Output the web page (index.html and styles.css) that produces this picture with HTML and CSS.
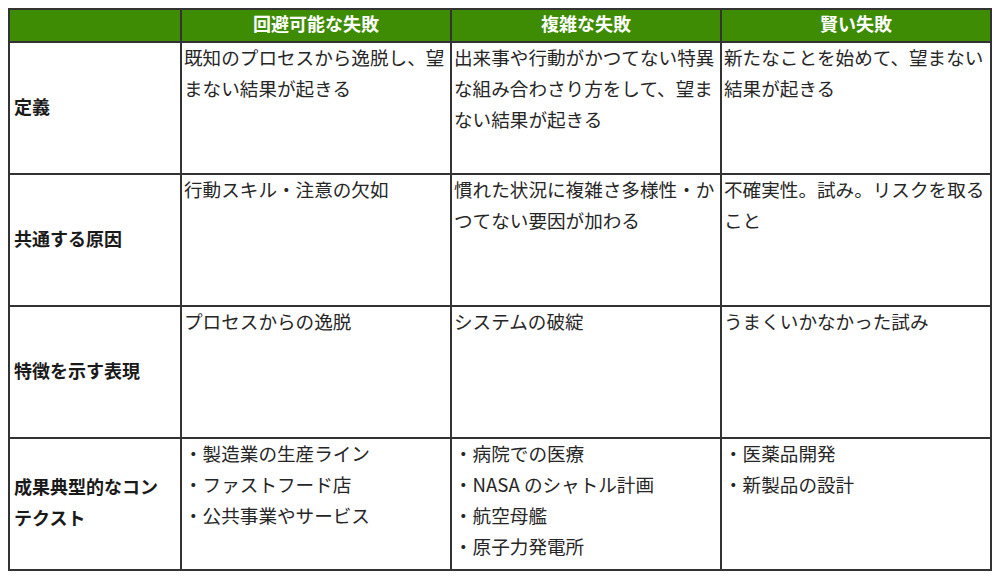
FILE: index.html
```html
<!DOCTYPE html>
<html lang="ja">
<head>
<meta charset="utf-8">
<link rel="stylesheet" href="styles.css">
</head>
<body>
<table class="grid">
  <colgroup>
    <col class="c-label">
    <col class="c-data">
    <col class="c-data">
    <col class="c-data">
  </colgroup>
  <thead>
    <tr class="head">
      <th></th>
      <th>回避可能な失敗</th>
      <th>複雑な失敗</th>
      <th>賢い失敗</th>
    </tr>
  </thead>
  <tbody>
    <tr class="row">
      <th class="label">定義</th>
      <td><div class="txt">既知のプロセスから逸脱し、望まない結果が起きる</div></td>
      <td><div class="txt">出来事や行動がかつてない特異な組み合わさり方をして、望まない結果が起きる</div></td>
      <td><div class="txt">新たなことを始めて、望まない結果が起きる</div></td>
    </tr>
    <tr class="row">
      <th class="label">共通する原因</th>
      <td><div class="txt">行動スキル・注意の欠如</div></td>
      <td><div class="txt">慣れた状況に複雑さ多様性・かつてない要因が加わる</div></td>
      <td><div class="txt">不確実性。試み。リスクを取ること</div></td>
    </tr>
    <tr class="row">
      <th class="label">特徴を示す表現</th>
      <td><div class="txt">プロセスからの逸脱</div></td>
      <td><div class="txt">システムの破綻</div></td>
      <td><div class="txt">うまくいかなかった試み</div></td>
    </tr>
    <tr class="row">
      <th class="label">成果典型的なコン<br>テクスト</th>
      <td><div class="txt">・製造業の生産ライン<br>・ファストフード店<br>・公共事業やサービス</div></td>
      <td><div class="txt">・病院での医療<br>・NASA のシャトル計画<br>・航空母艦<br>・原子力発電所</div></td>
      <td><div class="txt">・医薬品開発<br>・新製品の設計</div></td>
    </tr>
  </tbody>
</table>
</body>
</html>
```

FILE: styles.css
```css
html, body {
  margin: 0;
  padding: 0;
  background: #ffffff;
}

body {
  padding: 8px 0 0 8px;
  font-family: "Noto Sans CJK JP", "Noto Sans", sans-serif;
  color: #262626;
}

.grid {
  border-collapse: collapse;
  table-layout: fixed;
  width: 984px;
  border: 2px solid #333333;
}

.c-label { width: 172px; }
.c-data { width: 270px; }

.grid th,
.grid td {
  border: 2px solid #333333;
  padding: 0;
}

.head th {
  background: #3e8c04;
  color: #ffffff;
  font-weight: 700;
  font-size: 18px;
  height: 27px;
  line-height: 27px;
  text-align: center;
  vertical-align: middle;
  padding: 0 0 4px 0;
}

.row td {
  height: 130px;
  vertical-align: top;
  font-size: 18.6px;
  line-height: 31px;
  font-weight: 400;
  text-align: left;
  padding: 0 0 0 2px;
  word-break: break-all;
}

.txt {
  margin-top: -2px;
}

.row th.label {
  font-size: 18px;
  font-weight: 700;
  line-height: 31px;
  text-align: left;
  vertical-align: middle;
  padding: 0 0 4px 4px;
  color: #1a1a1a;
}
```
